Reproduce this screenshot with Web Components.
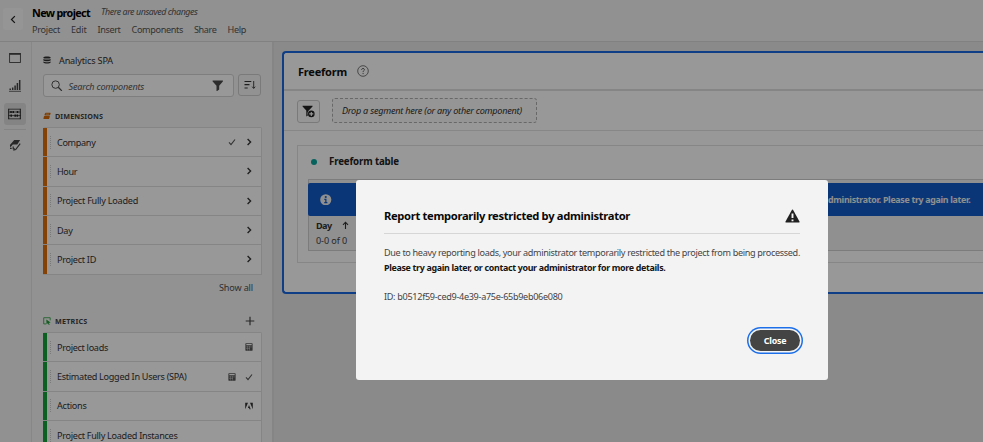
<!DOCTYPE html>
<html lang="en">
<head>
<meta charset="utf-8">
<title>New project</title>
<style>
html,body{margin:0;height:442px;overflow:hidden;background:#e6e6e6}
body{font-family:"Noto Sans","Open Sans",sans-serif;font-size:9.1px;color:#303030}
</style>
</head>
<body>
<workspace-app></workspace-app>
<script>
/* One line of text, tracked so that it fills the width given in "w". */
class FitText extends HTMLElement{
  connectedCallback(){
    const r=this.attachShadow({mode:'open'});
    r.innerHTML='<style>:host{display:block;flex:none;white-space:nowrap;line-height:15px}span{display:inline-block}</style><span><slot></slot></span>';
    const w=+this.getAttribute('w'), n=this.textContent.length;
    this.style.width=w+'px';
    const s=r.querySelector('span');
    s.style.letterSpacing='0px';
    const nat=s.getBoundingClientRect().width;
    s.style.letterSpacing=((w-nat)/n).toFixed(3)+'px';
  }
}
customElements.define('fit-text',FitText);

const ICONS={
  back:['0 0 8 8','<path d="M5.2 1 2.2 4l3 3" fill="none" stroke="currentColor" stroke-width="1.1"/>'],
  chevron:['0 0 8 8','<path d="M2.6 1 5.6 4l-3 3" fill="none" stroke="currentColor" stroke-width="1.35"/>'],
  check:['0 0 8 8','<path d="M1 4.4 3 6.6 7 1.5" fill="none" stroke="currentColor" stroke-width="1.1"/>'],
  plus:['0 0 10 10','<path d="M5 .7v8.6M.7 5h8.6" stroke="currentColor" stroke-width="1.2"/>'],
  panel:['0 0 12 12','<rect x=".6" y="1.5" width="10.8" height="9" fill="none" stroke="currentColor" stroke-width=".9"/><path d="M.5 2h11" stroke="currentColor" stroke-width="1.6"/>'],
  bars:['0 0 12 12','<path d="M0 11.3h12" stroke="currentColor" stroke-width=".8"/><path d="M1.2 8.5V10M3.7 7.5V10M6.1 5.5V10M8.4 3V10M10.7 0V10" stroke="currentColor" stroke-width="1.5"/>'],
  comps:['0 0 13 12','<path d="M.7.8v10.4M12.3.8v10.4" stroke="currentColor" stroke-width="1"/><path d="M.5 1.2h12M.5 4h12M.5 7.6h12M.5 10.8h12" stroke="currentColor" stroke-width=".7"/><path d="M3 2.9v2.200M5.300 2.900v2.200M9.500 2.900v2.200M3.200 6.500v2.200M7.200 6.500v2.200M9.300 6.500v2.200" stroke="currentColor" stroke-width="1.500"/>'],
  brush:['0 0 12 12','<path d="M5.200 1h5.900L8.300 5.600H3.800L1.300 8.500.9 6Z" fill="currentColor"/><path d="M1 9.300h1.700M4.200 7.500v2.700M11.200 4.700 6.700 10.500 5 10.900l.3-1.700" fill="none" stroke="currentColor" stroke-width="1.200"/>'],
  db:['0 0 8 8','<path d="M.4 1.500C.4.100 7.600.100 7.600 1.500v.4C7.600 2.800.4 2.800.4 1.900ZM.4 3c1.400.8 5.800.8 7.200 0v1.600c-1.200 1-6 1-7.200 0ZM.4 5.600c1.400.9 5.800.9 7.200 0v1c-.8 1.300-6.400 1.300-7.200 0Z" fill="currentColor"/>'],
  search:['0 0 12 12','<circle cx="4.800" cy="4.800" r="3.900" fill="none" stroke="currentColor" stroke-width="1"/><path d="M7.600 7.600 11.300 11.300" stroke="currentColor" stroke-width="1.300"/>'],
  funnel:['0 0 12 12','<path d="M.8.6h10.400q.5.300.1.900L7.500 6v4L4.700 11.900V6L.7 1.500Q.4.900.8.600Z" fill="currentColor"/>'],
  sort:['0 0 12 10','<path d="M.5 1.500h6.800M.5 4.700h5M.5 8h3.200" stroke="currentColor" stroke-width="1.200"/><path d="M9.700 1v7M8.200 6.700 9.700 8.500 11.200 6.700" fill="none" stroke="currentColor" stroke-width=".9"/>'],
  dims:['0 0 9 8','<path d="M3 .4h5.100q.6 0 .5.600L8 2.800q-.2.500-.8.500H2.100q-.6 0-.4-.6L2.300.9Q2.500.400 3 .4ZM1.500 4h5.800q.5 0 .4.500L7 6.700q-.2.600-.8.600H.9q-.6 0-.4-.6L1 4.500Q1.100 4 1.500 4Z" fill="currentColor"/><path d="M3.300 1.900h3.500" stroke="#f4f4f4" stroke-width=".5"/>'],
  mets:['0 0 9 9','<path d="M3.500 7.800H.8V.8h7.300v3" fill="none" stroke="currentColor" stroke-width=".9"/><path d="M3.700 2.800 8.600 6.300 6.500 6.700 7.600 8.500 6.600 9 5.500 7.100 4 8.200Z" fill="currentColor"/>'],
  calc:['0 0 8 8','<path fill-rule="evenodd" d="M.8.300h6.400q.4 0 .4.400v6.600q0 .4-.4.400H.8q-.4 0-.4-.4V.700Q.4.300.8.300ZM1.300 1.100v1.200h5.400V1.100Z" fill="currentColor"/><path d="M1 3.900h6M1 5.500h4M2.500 3v4.500M4.500 3v4.500" stroke="#ddd" stroke-width=".4"/>'],
  adobe:['0 0 8 8','<path d="M.2.700H3L.2 7.300ZM5 .7h2.800v6.600ZM4 3.100 5.700 7.300H4.500L4 6H2.900Z" fill="currentColor"/>'],
  help:['0 0 12 12','<circle cx="6" cy="6" r="5.300" fill="none" stroke="currentColor" stroke-width=".8"/><path d="M4.600 4.900C4.500 2.900 7.500 3 7.400 4.800 7.300 5.700 6.100 5.700 6.100 7.100M6.100 8v1.100" fill="none" stroke="currentColor" stroke-width=".95"/>'],
  addseg:['0 0 13 13','<path d="M.7.700h9.700q.5.200.1.700L7 5.300Q4.800 7 5.900 10.500L4.300 11.500V5.500L.6 1.400Q.3.900.7.700Z" fill="currentColor"/><circle cx="9.300" cy="8.900" r="3.300" fill="currentColor"/><path d="M9.300 6.900v4M7.300 8.900h4" stroke="#fff" stroke-width="1.100"/>'],
  info:['0 0 12 12','<circle cx="6" cy="6" r="5.800" fill="currentColor"/><circle cx="6" cy="3.200" r="1.100" fill="#115bc8"/><path d="M4.500 5.500h1.600v3.300M4.400 9h3.300" fill="none" stroke="#115bc8" stroke-width="1.300"/>'],
  up:['0 0 7 9','<path d="M3.500 8V1.300M1 3.900 3.500 1.200 6 3.900" fill="none" stroke="currentColor" stroke-width="1.100"/>'],
  alert:['0 0 15 14','<path d="M7 .8q.5-.8 1 0l6.600 12q.2.700-.5.800H.9q-.7-.1-.5-.8Z" fill="currentColor"/><path d="M7.500 4.600v4.500M7.500 10.400v1.900" stroke="#f3f3f3" stroke-width="1.900"/>']
};
class UiIcon extends HTMLElement{
  connectedCallback(){
    const [vb,body]=ICONS[this.getAttribute('name')];
    const w=this.getAttribute('w')||8,h=this.getAttribute('h')||w;
    this.attachShadow({mode:'open'}).innerHTML=`<style>:host{display:block;flex:none;width:${w}px;height:${h}px}svg{display:block;width:100%;height:100%}</style><svg viewBox="${vb}">${body}</svg>`;
  }
}
customElements.define('ui-icon',UiIcon);

const define=(name,html)=>customElements.define(name,class extends HTMLElement{
  connectedCallback(){ this.attachShadow({mode:'open'}).innerHTML=html; }
});

define('app-header',`<style>
:host{display:flex;box-sizing:border-box;height:42px;border-bottom:1px solid #d8d8d8;background:#f2f2f2}
.back{width:20px;height:22px;margin:8px 9px 0 3px;border-radius:3px;background:#f9f9f9;display:grid;place-items:center;color:#222}
.t{display:flex;gap:11px;padding-top:5px;height:16px}
.t fit-text:first-child{font-weight:700;font-size:10.800px;color:#000}
.t fit-text:last-child{font-style:italic;font-size:8.900px;color:#555;line-height:14px}
nav{display:flex;gap:11px;padding-top:1px;color:#555}
</style>
<div class="back"><ui-icon name="back" w="9"></ui-icon></div>
<div><div class="t"><fit-text w="58">New project</fit-text><fit-text w="96.500">There are unsaved changes</fit-text></div>
<nav><fit-text w="28">Project</fit-text><fit-text w="15.500">Edit</fit-text><fit-text w="23">Insert</fit-text><fit-text w="51.500">Components</fit-text><fit-text w="22.500">Share</fit-text><fit-text w="18.500">Help</fit-text></nav></div>`);

define('side-rail',`<style>
:host{display:flex;flex-direction:column;align-items:center;box-sizing:border-box;width:32px;padding-right:2px;border-right:1px solid #e2e2e2;background:#f2f2f2;color:#444}
.b{flex:none;width:22px;height:22px;display:grid;place-items:center;border-radius:3px;margin-bottom:6px}
.b:first-of-type{margin-top:5px}.on{background:#dcdcdc;color:#222}
hr{width:22px;height:1px;border:0;background:#ddd;margin:-2px 0 4px}
</style>
<div class="b"><ui-icon name="panel" w="12"></ui-icon></div><div class="b"><ui-icon name="bars" w="12"></ui-icon></div><div class="b on"><ui-icon name="comps" w="13" h="12"></ui-icon></div><hr><div class="b"><ui-icon name="brush" w="12"></ui-icon></div>`);

customElements.define('component-row',class extends HTMLElement{
  connectedCallback(){
    const icons=(this.getAttribute('icons')||'').split(' ').filter(Boolean);
    this.attachShadow({mode:'open'}).innerHTML=`<style>
:host{display:flex;align-items:center;box-sizing:border-box;height:29.330px;border-bottom:1px solid #dedede;background:linear-gradient(var(--bar),var(--bar)) 0 0/4px 100% no-repeat #fdfdfd;padding:0 8.500px 0 7px;color:#333}
i{width:2px;height:13px;flex:none;background:repeating-linear-gradient(#ccc 0 1px,transparent 1px 2px) 0 0/1px 100% no-repeat;margin-right:5px}
div{margin-left:auto;display:flex;gap:9px;color:#555}ui-icon[name=chevron],ui-icon[name=adobe]{color:#333}
</style><i></i><fit-text w="${this.getAttribute('w')}">${this.getAttribute('label')}</fit-text><div>${icons.map(n=>`<ui-icon name="${n}" w="8"></ui-icon>`).join('')}</div>`;
  }
});

define('component-panel',`<style>
:host{display:block;box-sizing:border-box;width:242px;padding:10px 11px 0;border-right:2px solid #dedede;background:#f4f4f4;overflow:hidden}
.src{display:flex;align-items:center;height:16px;gap:8px;color:#303030}
.find{display:flex;gap:4px;margin-top:6px;height:23px}
.box{flex:none;width:191px;box-sizing:border-box;display:flex;align-items:center;border:1px solid #d2d2d2;border-radius:3px;background:#fdfdfd;padding:0 10px 0 7px;color:#4a4a4a}
.box fit-text{font-style:italic;margin:2px auto 0 6px;color:#555}
.sort{width:24px;height:22px;box-sizing:border-box;display:grid;place-items:center;border:1px solid #ccc;border-radius:3px;color:#333}
.h{display:flex;align-items:center;height:16px;gap:4px;font-weight:700;font-size:7.200px;color:#404040}
.h ui-icon:last-child{margin-left:auto;margin-right:6px;color:#444}
.list{box-sizing:border-box;width:219px;border:solid #dedede;border-width:1px 1px 0 0;border-radius:2px 2px 0 0;margin-top:3px}
.all{display:flex;justify-content:flex-end;padding-right:8px;margin:5.500px 0 16px;height:17px;color:#505050}
</style>
<div class="src"><ui-icon name="db" w="8"></ui-icon><fit-text w="54">Analytics SPA</fit-text></div>
<div class="find"><div class="box"><ui-icon name="search" w="11.500"></ui-icon><fit-text w="75.500">Search components</fit-text><ui-icon name="funnel" w="11.500"></ui-icon></div><div class="sort"><ui-icon name="sort" w="12" h="10"></ui-icon></div></div>
<div class="h" style="margin-top:11px"><ui-icon name="dims" w="8" style="color:#d46a08"></ui-icon><fit-text w="48">DIMENSIONS</fit-text></div>
<div class="list" style="--bar:#dc7008">
<component-row w="38.500" label="Company" icons="check chevron"></component-row><component-row w="20" label="Hour" icons="chevron"></component-row><component-row w="81" label="Project Fully Loaded" icons="chevron"></component-row><component-row w="15.500" label="Day" icons="chevron"></component-row><component-row w="39" label="Project ID" icons="chevron"></component-row></div>
<div class="all"><fit-text w="34">Show all</fit-text></div>
<div class="h"><ui-icon name="mets" w="8" style="color:#239a3b"></ui-icon><fit-text w="32.500">METRICS</fit-text><ui-icon name="plus" w="10"></ui-icon></div>
<div class="list" style="--bar:#14a038">
<component-row w="51" label="Project loads" icons="calc"></component-row><component-row w="129.500" label="Estimated Logged In Users (SPA)" icons="calc check"></component-row><component-row w="29.500" label="Actions" icons="adobe"></component-row><component-row w="120.500" label="Project Fully Loaded Instances"></component-row></div>`);

define('freeform-table',`<style>
:host{display:block;box-sizing:border-box;height:118px;border:1px solid #e0e0e0;border-right:0;padding:8px 0 0 10px}
.t{display:flex;align-items:center;height:15px;gap:12.500px;padding-left:2.500px;font-weight:700;font-size:9.700px;color:#222}
.dot{width:6px;height:6px;border-radius:50%;background:#0aa39b}
.tb{box-sizing:border-box;height:72px;margin-top:10px;border:1px solid #cfcfcf;border-right:0;background:#f0f0f0;padding-top:3px}
.ban{box-sizing:border-box;height:33px;margin-left:-1px;background:#115bc8;border-radius:2px 0 0 2px;color:#eee;display:flex;align-items:center;justify-content:space-between;padding:0 12.500px 0 12px;font-weight:700;font-size:8.800px}
.ban fit-text{margin-top:2px}
.r{display:flex;gap:10px;align-items:center;padding:2px 0 0 7px;font-weight:700;color:#333}.n{margin-left:7px;color:#444}
</style>
<div class="t"><span class="dot"></span><fit-text w="70">Freeform table</fit-text></div>
<div class="tb"><div class="ban"><ui-icon name="info" w="11.500"></ui-icon><fit-text w="142.500">dministrator. Please try again later.</fit-text></div>
<div class="r"><fit-text w="15.500">Day</fit-text><ui-icon name="up" w="7" h="9"></ui-icon></div><fit-text class="n" w="31">0-0 of 0</fit-text></div>`);

define('freeform-panel',`<style>
:host{display:block;box-sizing:border-box;height:243px;margin:9px 0 0 7.500px;border:2px solid #1c68e0;border-right:0;border-radius:4px 0 0 4px;background:#fefefe}
.h{box-sizing:border-box;height:38px;display:flex;align-items:center;padding-left:14.500px;gap:10px;border-bottom:2px solid #dedede;font-weight:700;font-size:11px;color:#111}
.h ui-icon{color:#555}
.d{box-sizing:border-box;height:40px;display:flex;align-items:center;padding-left:13.500px;gap:12px;border-bottom:1px solid #e2e2e2}
.s{box-sizing:border-box;width:23px;height:23px;margin-top:1px;border:1px solid #ccc;border-radius:3px;background:#fafafa;display:grid;place-items:center;color:#222}
.z{box-sizing:border-box;width:205px;height:25px;border:1px dashed #adadad;border-radius:3px;background:#f8f8f8;padding:4px 0 0 9px;font-style:italic}
freeform-table{margin:14px 0 0 13.500px}
</style>
<div class="h"><fit-text w="49">Freeform</fit-text><ui-icon name="help" w="12"></ui-icon></div>
<div class="d"><div class="s"><ui-icon name="addseg" w="13"></ui-icon></div><div class="z"><fit-text w="180">Drop a segment here (or any other component)</fit-text></div></div>
<freeform-table></freeform-table>`);

define('alert-dialog',`<style>
:host{position:absolute;inset:0;display:grid;justify-content:start;align-content:start;padding:179.500px 0 0 356px;background:rgba(0,0,0,.4)}
section{box-sizing:border-box;width:472px;height:200px;border-radius:3px;background:#f3f3f3;padding:27px 28px 0;color:#444;display:flex;flex-direction:column}
.h{display:flex;justify-content:space-between;align-items:center;height:18px;padding:0 .5px 8px 0;border-bottom:1px solid #d6d6d6;font-weight:700;font-size:11.200px;color:#080808}
.h ui-icon{color:#202020}
b{color:#151515;font-size:8.900px}
p{margin:11px 0 0;height:30px}
.id{margin-top:14px}
button{all:unset;box-sizing:border-box;align-self:flex-end;width:50px;height:21.500px;margin-top:26px;border-radius:11px;background:#444;color:#fff;font-weight:700;font-size:8.900px;display:grid;place-items:center;box-shadow:0 0 0 1.500px #f5f5f5,0 0 0 3px #1c6fe8}
</style>
<section role="dialog"><div class="h"><fit-text w="246">Report temporarily restricted by administrator</fit-text><ui-icon name="alert" w="15" h="14"></ui-icon></div>
<p><fit-text w="416">Due to heavy reporting loads, your administrator temporarily restricted the project from being processed.</fit-text><b><fit-text w="281.500">Please try again later, or contact your administrator for more details.</fit-text></b></p>
<div class="id"><fit-text w="178.500">ID: b0512f59-ced9-4e39-a75e-65b9eb06e080</fit-text></div>
<button><fit-text w="22.500">Close</fit-text></button></section>`);

define('workspace-app',`<style>
:host{display:flex;flex-direction:column;position:relative;width:983px;height:442px;overflow:hidden}
.b{display:flex;flex:1;min-height:0}main{flex:1;min-width:0;background:#e7e7e7}component-panel{flex:none}
</style><app-header></app-header><div class="b"><side-rail></side-rail><component-panel></component-panel><main><freeform-panel></freeform-panel></main></div><alert-dialog></alert-dialog>`);
</script>
</body>
</html>
